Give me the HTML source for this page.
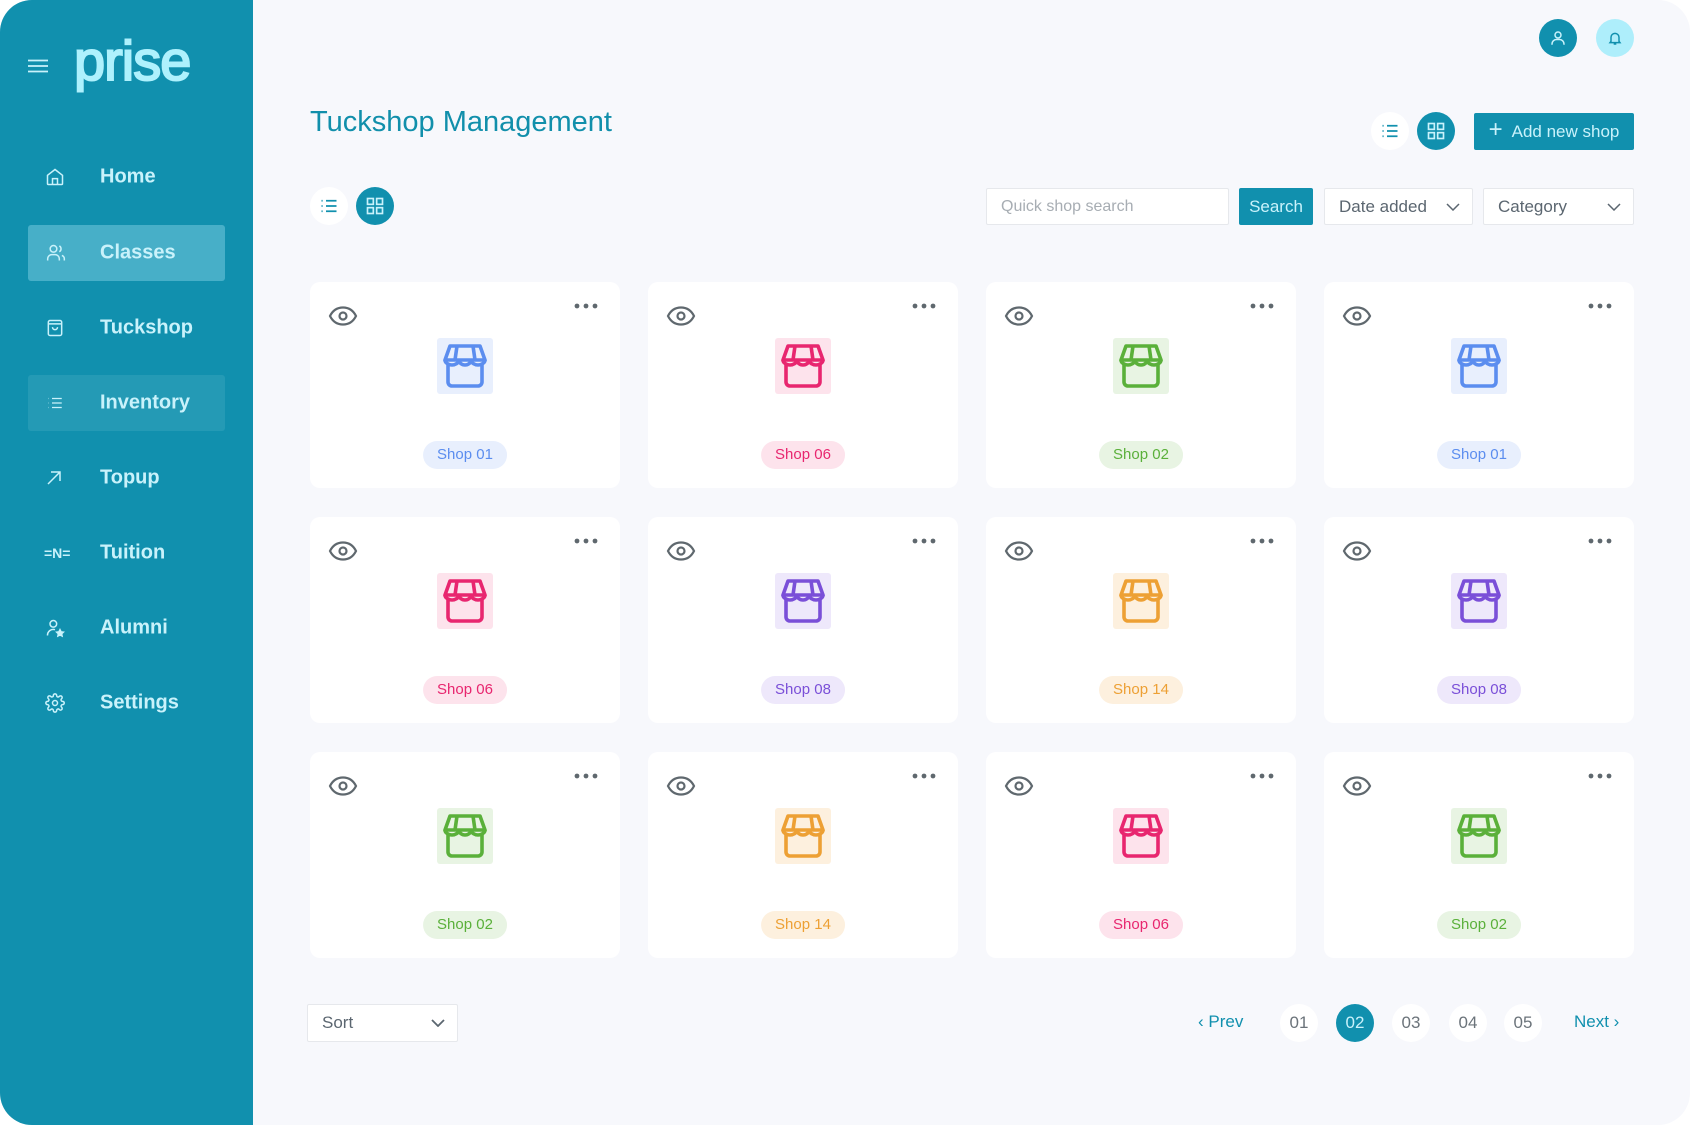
<!DOCTYPE html>
<html><head><meta charset="utf-8"><style>
*{box-sizing:border-box;margin:0;padding:0}
body{width:1690px;height:1125px;background:#fff;font-family:"Liberation Sans",sans-serif;position:relative;overflow:hidden}
.page{position:absolute;left:0;top:0;width:1690px;height:1125px;border-radius:32px;background:#f7f8fc;overflow:hidden}
.side{position:absolute;left:0;top:0;width:253px;height:1125px;background:#1190ae}
.abs{position:absolute}
.nav{position:absolute;left:28px;width:197px;height:56px;border-radius:3px;color:#c9f2fb;font-size:20px;font-weight:bold}
.nav span{position:absolute;left:72px;top:50%;transform:translateY(-50%)}
.nav svg{position:absolute;left:17px;top:50%;transform:translateY(-50%)}
.title{left:310px;top:106px;font-size:29px;color:#118fab}
.circ{position:absolute;width:38px;height:38px;border-radius:50%;display:flex;align-items:center;justify-content:center}
.card{position:absolute;width:310px;height:206px;background:#fff;border-radius:10px}
.card .eye{position:absolute;left:18px;top:22px}
.card .dots{position:absolute;right:22px;top:21px}
.card .ib{position:absolute;left:127px;top:56px;width:56px;height:56px;border-radius:3px;display:flex;align-items:center;justify-content:center}
.card .pill{position:absolute;top:159px;left:50%;transform:translateX(-50%);height:28px;padding:0 14px;border-radius:14px;font-size:15px;line-height:28px;white-space:nowrap}
.sel{position:absolute;background:#fff;border:1px solid #e6e8ec;border-radius:2px;font-size:17px;color:#5b6670;padding-left:14px;display:flex;align-items:center}
.sel svg{position:absolute;right:12px;top:50%;transform:translateY(-50%)}
.pg{position:absolute;top:1004px;width:38px;height:38px;border-radius:50%;background:#fff;color:#6b737a;font-size:17px;display:flex;align-items:center;justify-content:center}
</style></head><body>
<div class="page">
<div class="side">
<svg class="abs" style="left:28px;top:59px" width="20" height="14" viewBox="0 0 20 14"><path d="M0 1.5H20M0 7H20M0 12.5H20" stroke="#c9f2fb" stroke-width="1.8"/></svg>
<div class="abs" style="left:74px;top:28px;font-size:56px;color:#aef1fd;letter-spacing:-1px;-webkit-text-stroke:2px #aef1fd">prise</div>

<div class="nav" style="top:149px"><svg width="20" height="20" viewBox="0 0 24 24" fill="none" stroke="#c9f2fb" stroke-width="1.8"><path d="M3 10l9-7 9 7v10a1 1 0 0 1-1 1H4a1 1 0 0 1-1-1z M9 21v-7h6v7"/></svg><span>Home</span></div>
<div class="nav" style="top:225px;background:#47afc8"><svg width="22" height="20" viewBox="0 0 24 24" fill="none" stroke="#c9f2fb" stroke-width="1.8"><circle cx="9" cy="7" r="4"/><path d="M2 21v-2a5 5 0 0 1 5-5h4a5 5 0 0 1 5 5v2M16 3.5a4 4 0 0 1 0 7M22 21v-2a4 4 0 0 0-3-4"/></svg><span>Classes</span></div>
<div class="nav" style="top:300px"><svg width="20" height="20" viewBox="0 0 24 24" fill="none" stroke="#c9f2fb" stroke-width="1.8"><rect x="4" y="3" width="16" height="18" rx="2"/><path d="M4 7h16M9 11a3 3 0 0 0 6 0"/></svg><span>Tuckshop</span></div>
<div class="nav" style="top:375px;background:#249ab5"><svg width="20" height="18" viewBox="0 0 24 24" fill="none" stroke="#c9f2fb" stroke-width="1.8"><path d="M8 6h13M8 12h13M8 18h13M3 6h.5M3 12h.5M3 18h.5"/></svg><span>Inventory</span></div>
<div class="nav" style="top:450px"><svg width="18" height="18" viewBox="0 0 24 24" fill="none" stroke="#c9f2fb" stroke-width="2"><path d="M4 20L20 4M8 4h12v12"/></svg><span>Topup</span></div>
<div class="nav" style="top:525px"><span style="left:16px;font-size:14px">=N=</span><span>Tuition</span></div>
<div class="nav" style="top:600px"><svg width="20" height="20" viewBox="0 0 24 24" fill="none" stroke="#c9f2fb" stroke-width="1.8"><circle cx="10" cy="7" r="4"/><path d="M3 21a7 7 0 0 1 9-7"/><path d="M18 14l1.3 2.6 2.7.4-2 1.9.5 2.7-2.5-1.3-2.5 1.3.5-2.7-2-1.9 2.7-.4z" fill="#c9f2fb"/></svg><span>Alumni</span></div>
<div class="nav" style="top:675px"><svg width="20" height="20" viewBox="0 0 24 24" fill="none" stroke="#c9f2fb" stroke-width="1.8"><circle cx="12" cy="12" r="3"/><path d="M19.4 15a1.7 1.7 0 0 0 .3 1.8l.1.1a2 2 0 1 1-2.8 2.8l-.1-.1a1.7 1.7 0 0 0-2.9 1.2V21a2 2 0 1 1-4 0v-.1a1.7 1.7 0 0 0-2.9-1.2l-.1.1a2 2 0 1 1-2.8-2.8l.1-.1A1.7 1.7 0 0 0 3 14H3a2 2 0 1 1 0-4h.1a1.7 1.7 0 0 0 1.2-2.9l-.1-.1a2 2 0 1 1 2.8-2.8l.1.1A1.7 1.7 0 0 0 10 3V3a2 2 0 1 1 4 0v.1a1.7 1.7 0 0 0 2.9 1.2l.1-.1a2 2 0 1 1 2.8 2.8l-.1.1A1.7 1.7 0 0 0 21 10h.1a2 2 0 1 1 0 4h-.1a1.7 1.7 0 0 0-1.6 1z"/></svg><span>Settings</span></div>
</div>

<div class="abs title">Tuckshop Management</div>

<div class="circ" style="left:1539px;top:19px;background:#1190ae"><svg width="18" height="18" viewBox="0 0 24 24" fill="none" stroke="#c9f2fb" stroke-width="2"><circle cx="12" cy="8" r="4"/><path d="M4 21v-1a6 6 0 0 1 6-6h4a6 6 0 0 1 6 6v1"/></svg></div>
<div class="circ" style="left:1596px;top:19px;background:#aeeefb"><svg width="16" height="16" viewBox="0 0 24 24" fill="none" stroke="#1190ae" stroke-width="2.2"><path d="M6 17V11a6 6 0 0 1 12 0v6l1.5 2h-15zM10 21h4"/></svg></div>

<div class="circ" style="left:1371px;top:112px;background:#fff"><svg width="20" height="18" viewBox="0 0 24 24" fill="none" stroke="#1190ae" stroke-width="2.4"><path d="M8 5h14M8 12h14M8 19h14M2 5h1.5M2 12h1.5M2 19h1.5"/></svg></div>
<div class="circ" style="left:1417px;top:112px;background:#1190ae"><svg width="20" height="20" viewBox="0 0 24 24" fill="none" stroke="#c9f2fb" stroke-width="2"><rect x="3" y="3" width="7" height="7"/><rect x="14" y="3" width="7" height="7"/><rect x="3" y="14" width="7" height="7"/><rect x="14" y="14" width="7" height="7"/></svg></div>
<div class="abs" style="left:1474px;top:113px;width:160px;height:37px;background:#1190ae;border-radius:2px;color:#c9f2fb;font-size:17px;display:flex;align-items:center;justify-content:center;gap:9px"><span style="font-size:24px;line-height:1;margin-top:-3px">+</span>Add new shop</div>

<div class="circ" style="left:310px;top:187px;background:#fff"><svg width="20" height="18" viewBox="0 0 24 24" fill="none" stroke="#1190ae" stroke-width="2.4"><path d="M8 5h14M8 12h14M8 19h14M2 5h1.5M2 12h1.5M2 19h1.5"/></svg></div>
<div class="circ" style="left:356px;top:187px;background:#1190ae"><svg width="20" height="20" viewBox="0 0 24 24" fill="none" stroke="#c9f2fb" stroke-width="2"><rect x="3" y="3" width="7" height="7"/><rect x="14" y="3" width="7" height="7"/><rect x="3" y="14" width="7" height="7"/><rect x="14" y="14" width="7" height="7"/></svg></div>

<div class="sel" style="left:986px;top:188px;width:243px;height:37px;color:#a7adb3;font-size:16px">Quick shop search</div>
<div class="abs" style="left:1239px;top:188px;width:74px;height:37px;background:#1190ae;border-radius:2px;color:#c9f2fb;font-size:17px;display:flex;align-items:center;justify-content:center">Search</div>
<div class="sel" style="left:1324px;top:188px;width:149px;height:37px">Date added<svg width="14" height="8" viewBox="0 0 14 8"><path d="M1 1l6 6 6-6" stroke="#5b6670" stroke-width="1.5" fill="none"/></svg></div>
<div class="sel" style="left:1483px;top:188px;width:151px;height:37px">Category<svg width="14" height="8" viewBox="0 0 14 8"><path d="M1 1l6 6 6-6" stroke="#5b6670" stroke-width="1.5" fill="none"/></svg></div>

<div id="cards"></div>

<div class="sel" style="left:307px;top:1004px;width:151px;height:38px">Sort<svg width="14" height="8" viewBox="0 0 14 8"><path d="M1 1l6 6 6-6" stroke="#5b6670" stroke-width="1.8" fill="none"/></svg></div>

<div class="abs" style="left:1198px;top:1012px;color:#1190ae;font-size:17px">‹ Prev</div>
<div class="pg" style="left:1280px">01</div>
<div class="pg" style="left:1336px;background:#1190ae;color:#c9f2fb">02</div>
<div class="pg" style="left:1392px">03</div>
<div class="pg" style="left:1449px">04</div>
<div class="pg" style="left:1504px">05</div>
<div class="abs" style="left:1574px;top:1012px;color:#1190ae;font-size:17px">Next ›</div>
</div>
<script>
var C={b:['#5b8def','#e8effd'],p:['#e8266f','#fde3ec'],g:['#5ab03a','#e8f4e3'],u:['#7a4fd8','#eee8fb'],o:['#eda034','#fdf0de']};
var d=[['b','01'],['p','06'],['g','02'],['b','01'],['p','06'],['u','08'],['o','14'],['u','08'],['g','02'],['o','14'],['p','06'],['g','02']];
var xs=[310,648,986,1324],ys=[282,517,752],h='';
d.forEach(function(e,i){var c=C[e[0]],x=xs[i%4],y=ys[Math.floor(i/4)];
h+='<div class="card" style="left:'+x+'px;top:'+y+'px">'+
'<svg class="eye" width="30" height="24" viewBox="0 0 30 24" fill="none" stroke="#5f686e" stroke-width="2.2"><path d="M2 12C5 6 9.5 3.5 15 3.5S25 6 28 12C25 18 20.5 20.5 15 20.5S5 18 2 12z"/><circle cx="15" cy="12" r="3.5"/></svg>'+
'<svg class="dots" width="24" height="6" viewBox="0 0 24 6" fill="#5f686e"><circle cx="3" cy="3" r="2.4"/><circle cx="12" cy="3" r="2.4"/><circle cx="21" cy="3" r="2.4"/></svg>'+
'<div class="ib" style="background:'+c[1]+'"><svg width="48" height="46" viewBox="0 0 48 46" fill="none" stroke="'+c[0]+'" stroke-width="3.6" stroke-linejoin="round"><path d="M9 3h30l5 14H4z"/><path d="M4 17c0 3 4 5 7 5s7-2 7-5M18 17c0 3 3 5 6 5s6-2 6-5M30 17c0 3 4 5 7 5s7-2 7-5M16 3l-2 14M32 3l2 14"/><path d="M7 20v19a4 4 0 0 0 4 4h26a4 4 0 0 0 4-4V20"/></svg></div>'+
'<div class="pill" style="background:'+c[1]+';color:'+c[0]+'">Shop '+e[1]+'</div></div>';});
document.getElementById('cards').innerHTML=h;
</script>
</body></html>
